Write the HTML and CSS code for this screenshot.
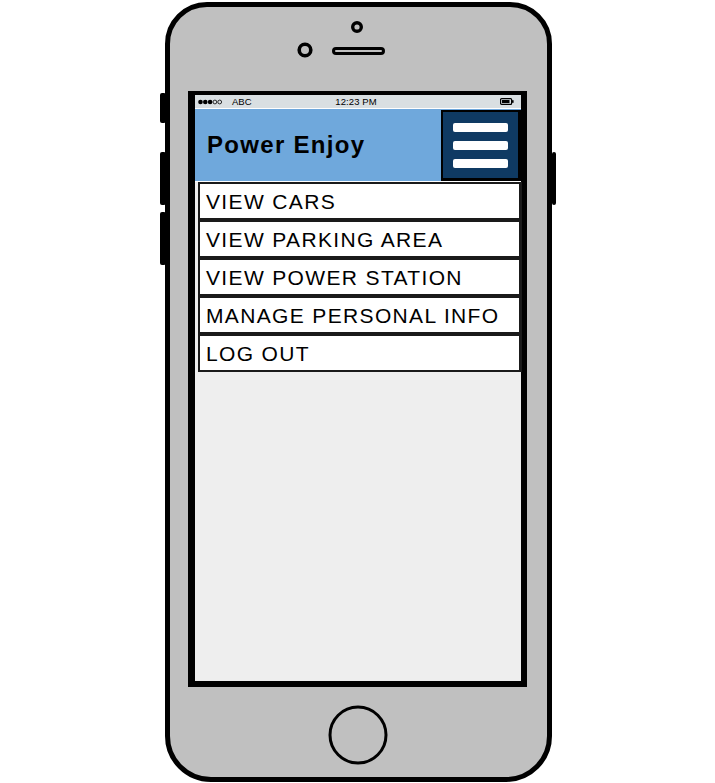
FILE: index.html
```html
<!DOCTYPE html>
<html>
<head>
<meta charset="utf-8">
<title>Power Enjoy</title>
<link rel="stylesheet" href="styles.css">
</head>
<body>
<div class="phone">
  <span class="side-btn left b1"></span>
  <span class="side-btn left b2"></span>
  <span class="side-btn left b3"></span>
  <span class="side-btn right b2"></span>
  <svg class="top" width="377" height="84" viewBox="0 0 377 84">
    <circle cx="187" cy="20" r="4.3" fill="#c0c0c0" stroke="#000" stroke-width="3.4"/>
    <circle cx="135" cy="43" r="5.8" fill="#c0c0c0" stroke="#000" stroke-width="3.6"/>
    <rect x="163.5" y="41.5" width="50" height="5" rx="2.5" fill="#c0c0c0" stroke="#000" stroke-width="3"/>
  </svg>
  <div class="screen">
    <div class="status">
      <div class="carrier">
        <svg width="25" height="6" viewBox="0 0 25 6">
          <circle cx="2.5" cy="3" r="2.3" fill="#000"/>
          <circle cx="7.3" cy="3" r="2.3" fill="#000"/>
          <circle cx="12.1" cy="3" r="2.3" fill="#000"/>
          <circle cx="16.9" cy="3" r="1.9" fill="none" stroke="#000" stroke-width="0.8"/>
          <circle cx="21.7" cy="3" r="1.9" fill="none" stroke="#000" stroke-width="0.8"/>
        </svg>
        <span>ABC</span>
      </div>
      <div class="time">12:23 PM</div>
      <div class="battery">
        <svg width="14" height="7" viewBox="0 0 14 7">
          <rect x="0.6" y="0.6" width="11" height="5.8" rx="1" fill="none" stroke="#000" stroke-width="1.2"/>
          <rect x="2" y="2" width="7.5" height="3" fill="#000"/>
          <rect x="12" y="2.2" width="1.6" height="2.6" fill="#000"/>
        </svg>
      </div>
    </div>
    <div class="header">
      <h1 class="title">Power Enjoy</h1>
      <div class="menu-btn">
        <span class="bar"></span>
        <span class="bar"></span>
        <span class="bar"></span>
      </div>
    </div>
    <ul class="menu">
      <li class="item">VIEW CARS</li>
      <li class="item">VIEW PARKING AREA</li>
      <li class="item">VIEW POWER STATION</li>
      <li class="item">MANAGE PERSONAL INFO</li>
      <li class="item">LOG OUT</li>
    </ul>
  </div>
  <svg class="home" width="377" height="90" viewBox="0 0 377 90">
    <circle cx="188" cy="48" r="28" fill="#c0c0c0" stroke="#000" stroke-width="3"/>
  </svg>
</div>
</body>
</html>
```

FILE: styles.css
```css
* { box-sizing: border-box; }

body {
  margin: 0;
  background: #ffffff;
  font-family: "Liberation Sans", Arial, sans-serif;
}

.phone {
  position: relative;
  margin: 2px 0 0 165px;
  width: 387px;
  height: 780px;
  border: 5px solid #000;
  border-radius: 42px 42px 46px 46px;
  background: #c0c0c0;
  display: flex;
  flex-direction: column;
}

.side-btn {
  position: absolute;
  background: #000;
  border-radius: 2px;
}
.side-btn.left { left: -10px; width: 6px; }
.side-btn.right { left: 382px; width: 4px; }
.side-btn.b1 { top: 86px; height: 30px; }
.side-btn.b2 { top: 145px; height: 53px; }
.side-btn.b3 { top: 205px; height: 53px; }

.top, .home { display: block; flex: none; }

.screen {
  flex: none;
  margin-left: 18px;
  width: 339px;
  height: 596px;
  border-style: solid;
  border-color: #000;
  border-width: 4px 6px 6px 7px;
  background: #eeeeee;
  display: flex;
  flex-direction: column;
}

.status {
  flex: none;
  height: 14px;
  background: #d9dfe2;
  border-bottom: 1px solid #ffffff;
  display: grid;
  grid-template-columns: 1fr auto 1fr;
  align-items: center;
  padding: 0 7px 0 3px;
  font-size: 9.5px;
  line-height: 12px;
  color: #000;
}
.carrier { display: flex; align-items: center; gap: 9px; }
.carrier svg { display: block; }
.time { letter-spacing: 0.1px; }
.battery { display: flex; justify-content: flex-end; }
.battery svg { display: block; }

.header {
  flex: none;
  height: 73px;
  background: #6fa8dc;
  display: flex;
  align-items: center;
  border-bottom: 1px solid #ffffff;
}
.title {
  margin: 0 0 0 12px;
  font-size: 24px;
  font-weight: bold;
  letter-spacing: 1.3px;
  color: #000;
}
.menu-btn {
  margin-left: auto;
  align-self: stretch;
  margin-top: 1px;
  width: 80px;
  background: #0f3a63;
  border-style: solid;
  border-color: #000;
  border-width: 2px 3px 3px 2px;
  display: flex;
  flex-direction: column;
  align-items: center;
  justify-content: center;
  gap: 9px;
}
.bar {
  display: block;
  width: 55px;
  height: 9px;
  border-radius: 2px;
  background: #ffffff;
}

.menu {
  list-style: none;
  margin: 0 0 0 3px;
  padding: 0;
  width: 324px;
}
.item {
  height: 38px;
  border: 2px solid #1a1a1a;
  border-right-width: 3px;
  background: #ffffff;
  font-size: 21px;
  line-height: 35px;
  letter-spacing: 1.35px;
  padding-left: 6px;
  color: #000;
  white-space: nowrap;
}
```
